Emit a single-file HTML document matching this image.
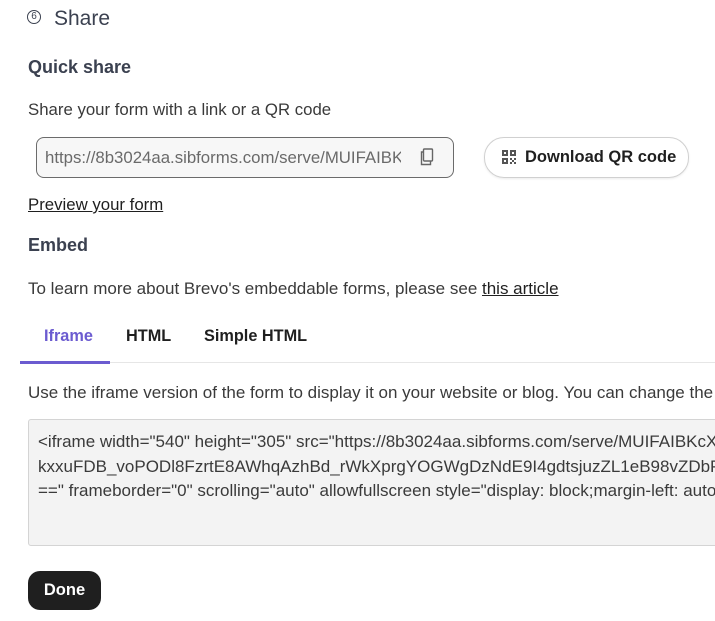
<!DOCTYPE html>
<html><head><style>
body{margin:0;width:715px;height:621px;overflow:hidden;background:#fff;font-family:"Liberation Sans",sans-serif;color:#333;position:relative}
.a{position:absolute;white-space:nowrap}
</style></head><body>
<div class="a" style="left:27px;top:10px;width:14px;height:14px;border:1.5px solid #3b4150;border-radius:50%;box-sizing:border-box;font-size:10px;line-height:11px;text-align:center;color:#3b4150">6</div>
<div class="a" style="left:54px;top:7px;font-size:21px;color:#3b4150">Share</div>
<div class="a" style="left:28px;top:57px;font-size:18px;font-weight:bold;color:#3b4150">Quick share</div>
<div class="a" style="left:28px;top:100px;font-size:16.8px;color:#3a3a3a">Share your form with a link or a QR code</div>
<div class="a" style="left:36px;top:137px;width:416px;height:39px;border:1px solid #6b6b6b;border-radius:8px;background:#f7f7f7;overflow:hidden">
 <div class="a" style="left:8px;top:10px;font-size:16.8px;color:#6a6a6a;width:356px;overflow:hidden">https://8b3024aa.sibforms.com/serve/MUIFAIBKcXbv</div>
 <svg class="a" style="left:382px;top:10px" width="16" height="18" viewBox="0 0 16 18" fill="none" stroke="#666" stroke-width="1.4"><rect x="4.5" y="1" width="9" height="12" rx="1"/><path d="M4.5 4H2.5v12.5h9v-3.5"/></svg>
</div>
<div class="a" style="left:484px;top:137px;width:203px;height:39px;border:1px solid #d0d0d0;border-radius:20px;box-shadow:0 1px 2px rgba(0,0,0,.08)">
 <svg class="a" style="left:17px;top:12px" width="14" height="14" viewBox="0 0 14 14" fill="#555"><rect x="0" y="0" width="6" height="6"/><rect x="8" y="0" width="6" height="6"/><rect x="0" y="8" width="6" height="6"/><rect x="8" y="8" width="2" height="2"/><rect x="12" y="8" width="2" height="2"/><rect x="8" y="12" width="2" height="2"/><rect x="12" y="12" width="2" height="2"/><rect x="10" y="10" width="2" height="2"/><rect x="2" y="2" width="2" height="2" fill="#fff"/><rect x="10" y="2" width="2" height="2" fill="#fff"/><rect x="2" y="10" width="2" height="2" fill="#fff"/></svg>
 <div class="a" style="left:40px;top:10px;font-size:16.5px;font-weight:bold;color:#1f1f1f">Download QR code</div>
</div>
<div class="a" style="left:28px;top:195px;font-size:16.8px;color:#1f1f1f;text-decoration:underline">Preview your form</div>
<div class="a" style="left:28px;top:235px;font-size:18px;font-weight:bold;color:#3b4150">Embed</div>
<div class="a" style="left:28px;top:279px;font-size:17px;color:#3a3a3a">To learn more about Brevo's embeddable forms, please see <span style="text-decoration:underline;color:#1f1f1f">this article</span></div>
<div class="a" style="left:20px;top:362px;width:695px;height:1px;background:#e6e6e6"></div>
<div class="a" style="left:20px;top:361px;width:90px;height:3px;background:#6b5bd0"></div>
<div class="a" style="left:44px;top:327px;font-size:16.3px;font-weight:bold;color:#6b5bd0">Iframe</div>
<div class="a" style="left:126px;top:327px;font-size:16.3px;font-weight:bold;color:#1f1f1f">HTML</div>
<div class="a" style="left:204px;top:327px;font-size:16.3px;font-weight:bold;color:#1f1f1f">Simple HTML</div>
<div class="a" style="left:28px;top:383px;font-size:17px;color:#3a3a3a">Use the iframe version of the form to display it on your website or blog. You can change the</div>
<div class="a" style="left:28px;top:419px;width:700px;height:125px;border:1px solid #d4d4d4;border-radius:3px;background:#f3f3f3;overflow:hidden">
 <div class="a" style="left:9px;top:10px;font-size:17px;line-height:24.5px;color:#3a3a3a">&lt;iframe width="540" height="305" src="https://8b3024aa.sibforms.com/serve/MUIFAIBKcXbv<br>kxxuFDB_voPODl8FzrtE8AWhqAzhBd_rWkXprgYOGWgDzNdE9I4gdtsjuzZL1eB98vZDbPWcXbv<br>==" frameborder="0" scrolling="auto" allowfullscreen style="display: block;margin-left: auto</div>
</div>
<div class="a" style="left:28px;top:571px;width:73px;height:39px;border-radius:12px;background:#1f1f1f;color:#fff;font-size:16.5px;font-weight:bold;text-align:center;line-height:39px">Done</div>
</body></html>
